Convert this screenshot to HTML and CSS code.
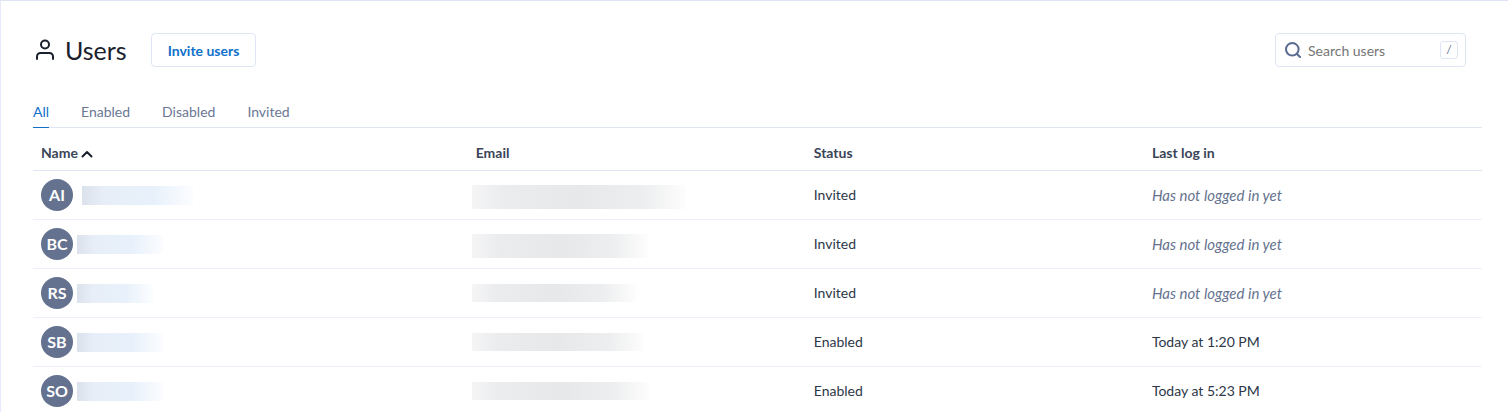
FILE: index.html
```html
<!DOCTYPE html>
<html lang="en">

<head>
    <meta charset="UTF-8">
    <meta name="viewport" content="width=device-width, initial-scale=1.0">
    <title>Users</title>
    <link rel="stylesheet" href="styles.css">
</head>

<body>
    <main class="page">
        <header class="header">
            <svg class="header-icon" viewBox="0 0 20 22" aria-hidden="true">
                <circle cx="10" cy="5.500" r="4" />
                <path d="M2 20V17.500a3.500 3.500 0 0 1 3.500-3.500h9a3.500 3.500 0 0 1 3.500 3.500V20" />
            </svg>
            <h1>Users</h1>
            <button type="button" class="button">Invite users</button>

            <label class="search">
                <svg class="search-icon" viewBox="0 0 16 16" aria-hidden="true">
                    <circle cx="7.300" cy="7.300" r="6.300" />
                    <path d="M11.800 11.800L15 15" />
                </svg>
                <input type="text" placeholder="Search users" aria-label="Search users">
                <kbd>/</kbd>
            </label>
        </header>

        <nav class="tabs">
            <a href="#all" class="tab active">All</a>
            <a href="#enabled" class="tab">Enabled</a>
            <a href="#disabled" class="tab">Disabled</a>
            <a href="#invited" class="tab">Invited</a>
        </nav>

        <table class="users">
            <thead>
                <tr>
                    <th class="col-name">Name
                        <svg class="sort-icon" viewBox="0 0 12 8" aria-hidden="true">
                            <path d="M1.500 6.500L6 2L10.500 6.500" />
                        </svg>
                    </th>
                    <th>Email</th>
                    <th>Status</th>
                    <th>Last log in</th>
                </tr>
            </thead>
            <tbody>
                <tr>
                    <td>
                        <div class="user wide">
                            <span class="avatar">AI</span>
                            <span class="hidden-name" style="width: 111px"></span>
                        </div>
                    </td>
                    <td><div class="hidden-email tall" style="width: 214px"></div></td>
                    <td>Invited</td>
                    <td class="never">Has not logged in yet</td>
                </tr>
                <tr>
                    <td>
                        <div class="user">
                            <span class="avatar">BC</span>
                            <span class="hidden-name" style="width: 86px"></span>
                        </div>
                    </td>
                    <td><div class="hidden-email tall" style="width: 176px"></div></td>
                    <td>Invited</td>
                    <td class="never">Has not logged in yet</td>
                </tr>
                <tr>
                    <td>
                        <div class="user">
                            <span class="avatar">RS</span>
                            <span class="hidden-name" style="width: 76px"></span>
                        </div>
                    </td>
                    <td><div class="hidden-email" style="width: 164px"></div></td>
                    <td>Invited</td>
                    <td class="never">Has not logged in yet</td>
                </tr>
                <tr>
                    <td>
                        <div class="user">
                            <span class="avatar">SB</span>
                            <span class="hidden-name" style="width: 86px"></span>
                        </div>
                    </td>
                    <td><div class="hidden-email" style="width: 172px"></div></td>
                    <td>Enabled</td>
                    <td>Today at 1:20 PM</td>
                </tr>
                <tr>
                    <td>
                        <div class="user">
                            <span class="avatar">SO</span>
                            <span class="hidden-name" style="width: 86px"></span>
                        </div>
                    </td>
                    <td><div class="hidden-email" style="width: 177px"></div></td>
                    <td>Enabled</td>
                    <td>Today at 5:23 PM</td>
                </tr>
            </tbody>
        </table>
    </main>
</body>

</html>
```
FILE: styles.css
```css
* {
    box-sizing: border-box;
}

body {
    margin: 0;
    font-family: Lato, "Liberation Sans", sans-serif;
    font-size: 14px;
    line-height: 20px;
    color: #2d3748;
    background-color: #fff;
}

.page {
    height: 100vh;
    overflow: hidden;
    padding: 32px 26px 0 32px;
    border-top: 1px solid #dfe4f4;
    border-left: 1px solid #e6eafa;
}

svg {
    fill: none;
    stroke: currentColor;
    stroke-width: 2;
    stroke-linecap: round;
    stroke-linejoin: round;
}

.header {
    display: flex;
    align-items: center;
    padding-right: 16px;
}

.header-icon {
    width: 20px;
    height: 22px;
    margin: 0 10px 0 2px;
    color: #1a202c;
}

h1 {
    margin: 0 24px 0 0;
    font-size: 25px;
    font-weight: 400;
    line-height: 32px;
    color: #1a202c;
}

.button {
    height: 34px;
    padding: 0 16px;
    border: 1px solid #dfe5f5;
    border-radius: 4px;
    background-color: #fff;
    color: #1070ca;
    font-family: inherit;
    font-size: 14px;
    font-weight: 700;
    cursor: pointer;
}

.search {
    display: flex;
    align-items: center;
    width: 191px;
    height: 34px;
    margin-left: auto;
    padding: 0 7px 0 9px;
    border: 1px solid #dfe5f5;
    border-radius: 4px;
}

.search-icon {
    flex: none;
    width: 16px;
    height: 16px;
    margin-right: 7px;
    color: #5a6b92;
}

.search input {
    flex: 1;
    min-width: 0;
    padding: 0;
    border: 0;
    outline: 0;
    background: none;
    color: #2d3748;
    font-family: inherit;
    font-size: 14px;
}

.search input::placeholder {
    color: #757575;
}

kbd {
    width: 18px;
    height: 18px;
    border: 1px solid #dfe5f5;
    border-radius: 3px;
    color: #66738f;
    font-family: inherit;
    font-size: 12px;
    line-height: 16px;
    text-align: center;
}

.tabs {
    display: flex;
    gap: 32px;
    margin-top: 35px;
    border-bottom: 1px solid #dfe5f2;
}

.tab {
    margin-bottom: -1px;
    padding-bottom: 5px;
    border-bottom: 1px solid transparent;
    color: #6b7794;
    text-decoration: none;
}

.tab.active {
    border-bottom-color: #1070ca;
    color: #1070ca;
}

.users {
    width: 100%;
    border-collapse: separate;
    border-spacing: 0;
    table-layout: fixed;
}

th {
    height: 43px;
    padding: 8px 8px 0;
    border-bottom: 1px solid #dfe5f5;
    font-weight: 700;
    text-align: left;
    color: #3a4558;
}

.col-name {
    width: 30%;
}

.sort-icon {
    width: 12px;
    height: 8px;
    color: #1a202c;
}

td {
    height: 49px;
    padding: 8px;
    border-bottom: 1px solid #edf0fa;
}

.never {
    color: #66738f;
    font-size: 15px;
    font-style: italic;
}

.user {
    display: flex;
    align-items: center;
    gap: 4px;
}

.user.wide {
    gap: 9px;
}

.avatar {
    width: 32px;
    height: 32px;
    border-radius: 50%;
    background-color: #64728f;
    color: #fff;
    font-size: 16px;
    font-weight: 700;
    line-height: 32px;
    text-align: center;
}

/* blurred out personal data */
.hidden-name {
    height: 19px;
    background: linear-gradient(to right, #dbe2ec, #e7eef8 20%, #e8f1fb 65%, #fcfdff);
}

.hidden-email {
    height: 18px;
    margin-left: -4px;
    background: linear-gradient(to right, #f5f5f6, #ebecee 15%, #e7e8ea 50%, #edeeef 80%, #fdfdfd);
}

.hidden-email.tall {
    height: 24px;
    margin-top: 4px;
}
```
